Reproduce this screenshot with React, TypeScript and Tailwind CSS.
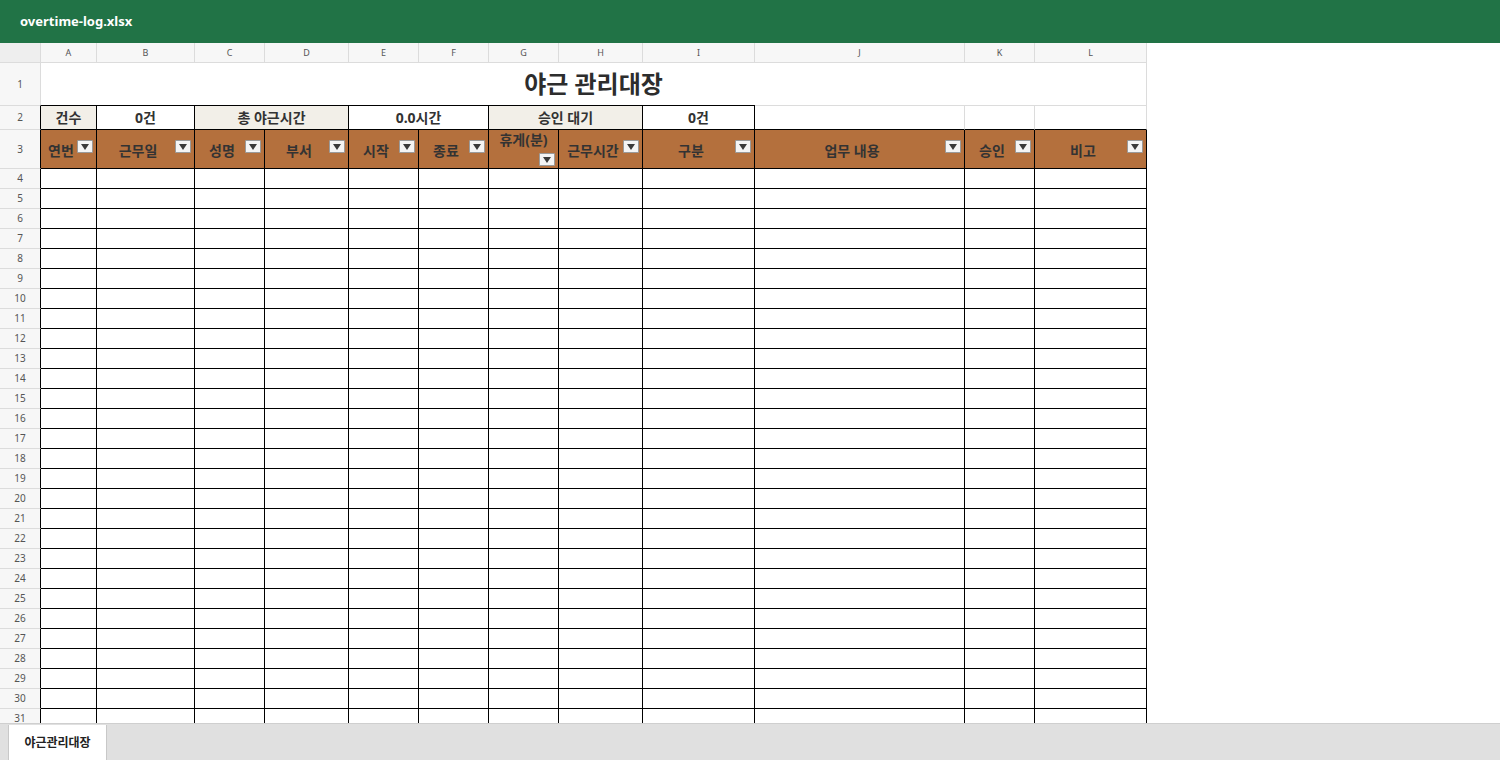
import React from 'react'

const font = { fontFamily: '"Noto Sans", "Noto Sans CJK KR", sans-serif' }

const cols = ['A', 'B', 'C', 'D', 'E', 'F', 'G', 'H', 'I', 'J', 'K', 'L']
const widths = [56, 98, 70, 84, 70, 70, 70, 84, 112, 210, 70, 112]

const headers = ['연번', '근무일', '성명', '부서', '시작', '종료', '휴게(분)', '근무시간', '구분', '업무 내용', '승인', '비고']

const dataRows = Array.from({ length: 36 }, (_, i) => i + 4)

const FilterButton: React.FC = () => (
    <span className="inline-flex w-[16px] h-[13px] shrink-0 items-center justify-center bg-[#f4f4f4] border border-[#9a9a9a] rounded-[1px]">
        <svg width="10" height="8" viewBox="0 0 10 8">
            <polygon points="1,1 9,1 5,7" fill="#3a3a3a" />
        </svg>
    </span>
)

const rowHead = 'w-[41px] bg-[#f7f7f7] text-[10px] text-[#555] text-center border-r border-b border-[#dcdcdc] p-0 font-normal'

export default function App() {
    return (
        <div className="w-[1500px] h-[760px] flex flex-col bg-white overflow-hidden" style={font}>
            {/* Title bar */}
            <div className="h-[43px] shrink-0 bg-[#217346] flex items-center pl-5">
                <span className="text-white text-[13px] font-bold">overtime-log.xlsx</span>
            </div>

            {/* Sheet */}
            <div className="flex-1 overflow-hidden">
                <table className="table-fixed border-separate border-spacing-0 text-[#333]" style={{ width: 1147 }}>
                    <colgroup>
                        <col style={{ width: 41 }} />
                        {widths.map((w, i) => (
                            <col key={i} style={{ width: w }} />
                        ))}
                    </colgroup>
                    <tbody>
                        {/* Column letters */}
                        <tr>
                            <td className="h-[20px] bg-[#eeeeee] border-r border-b border-[#dcdcdc] p-0" />
                            {cols.map((c) => (
                                <td key={c} className="h-[20px] bg-[#f7f7f7] border-r border-b border-[#dcdcdc] text-[9px] text-[#555] text-center p-0">
                                    {c}
                                </td>
                            ))}
                        </tr>

                        {/* Row 1: title */}
                        <tr>
                            <td className={`${rowHead} h-[42px] border-b-0`}>1</td>
                            <td colSpan={12} className="h-[42px] border-r border-[#dcdcdc] text-center p-0 text-[24px] font-bold text-[#2d2d2d]">
                                야근 관리대장
                            </td>
                        </tr>

                        {/* Row 2: summary */}
                        <tr className="text-[14px] font-bold">
                            <td className="h-[25px] w-[41px] bg-[#f7f7f7] text-[10px] text-[#555] text-center border-t border-b border-r border-t-[#dcdcdc] border-b-[#dcdcdc] border-r-black p-0 font-normal">2</td>
                            <td className="bg-[#f2efe8] border-t border-r border-b border-black text-center p-0">건수</td>
                            <td className="border-t border-r border-b border-black text-center p-0">0건</td>
                            <td colSpan={2} className="bg-[#f2efe8] border-t border-r border-b border-black text-center p-0">총 야근시간</td>
                            <td colSpan={2} className="border-t border-r border-b border-black text-center p-0">0.0시간</td>
                            <td colSpan={2} className="bg-[#f2efe8] border-t border-r border-b border-black text-center p-0">승인 대기</td>
                            <td className="border-t border-r border-b border-black text-center p-0">0건</td>
                            <td className="border-t border-r border-t-[#dcdcdc] border-r-[#dcdcdc] border-b border-b-black p-0" />
                            <td className="border-t border-r border-t-[#dcdcdc] border-r-[#dcdcdc] border-b border-b-black p-0" />
                            <td className="border-t border-r border-t-[#dcdcdc] border-r-[#dcdcdc] border-b border-b-black p-0" />
                        </tr>

                        {/* Row 3: headers */}
                        <tr>
                            <td className={`${rowHead} h-[39px] border-r-black`}>3</td>
                            {headers.map((h, i) => (
                                <td key={h} className="h-[39px] bg-[#b4703d] border-r border-b border-black p-0">
                                    {i === 6 ? (
                                        <div className="flex flex-col items-center px-1 leading-[18px] -mt-[1px]">
                                            <span className="text-[14px] font-bold text-[#333]">{h}</span>
                                            <span className="self-end -mr-[1px]">
                                                <FilterButton />
                                            </span>
                                        </div>
                                    ) : (
                                        <div className="flex items-center pl-1 pr-[3px]">
                                            <span className="flex-1 text-center text-[14px] font-bold text-[#333] whitespace-nowrap pt-[2px]">{h}</span>
                                            <span className="-mt-[5px] flex">
                                                <FilterButton />
                                            </span>
                                        </div>
                                    )}
                                </td>
                            ))}
                        </tr>

                        {/* Data rows */}
                        {dataRows.map((r) => (
                            <tr key={r}>
                                <td className={`${rowHead} h-[20px] border-r-black`}>{r}</td>
                                {cols.map((c) => (
                                    <td key={c} className="h-[20px] border-r border-b border-black p-0" />
                                ))}
                            </tr>
                        ))}
                    </tbody>
                </table>
            </div>

            {/* Sheet tabs */}
            <div className="h-[37px] shrink-0 bg-[#e0e0e0] border-t border-[#cfcfcf] flex items-end pl-2">
                <div className="h-[35px] w-[99px] bg-white border-l border-r border-[#c8c8c8] flex items-center justify-center text-[12px] font-bold text-[#222]">
                    야근관리대장
                </div>
            </div>
        </div>
    )
}
